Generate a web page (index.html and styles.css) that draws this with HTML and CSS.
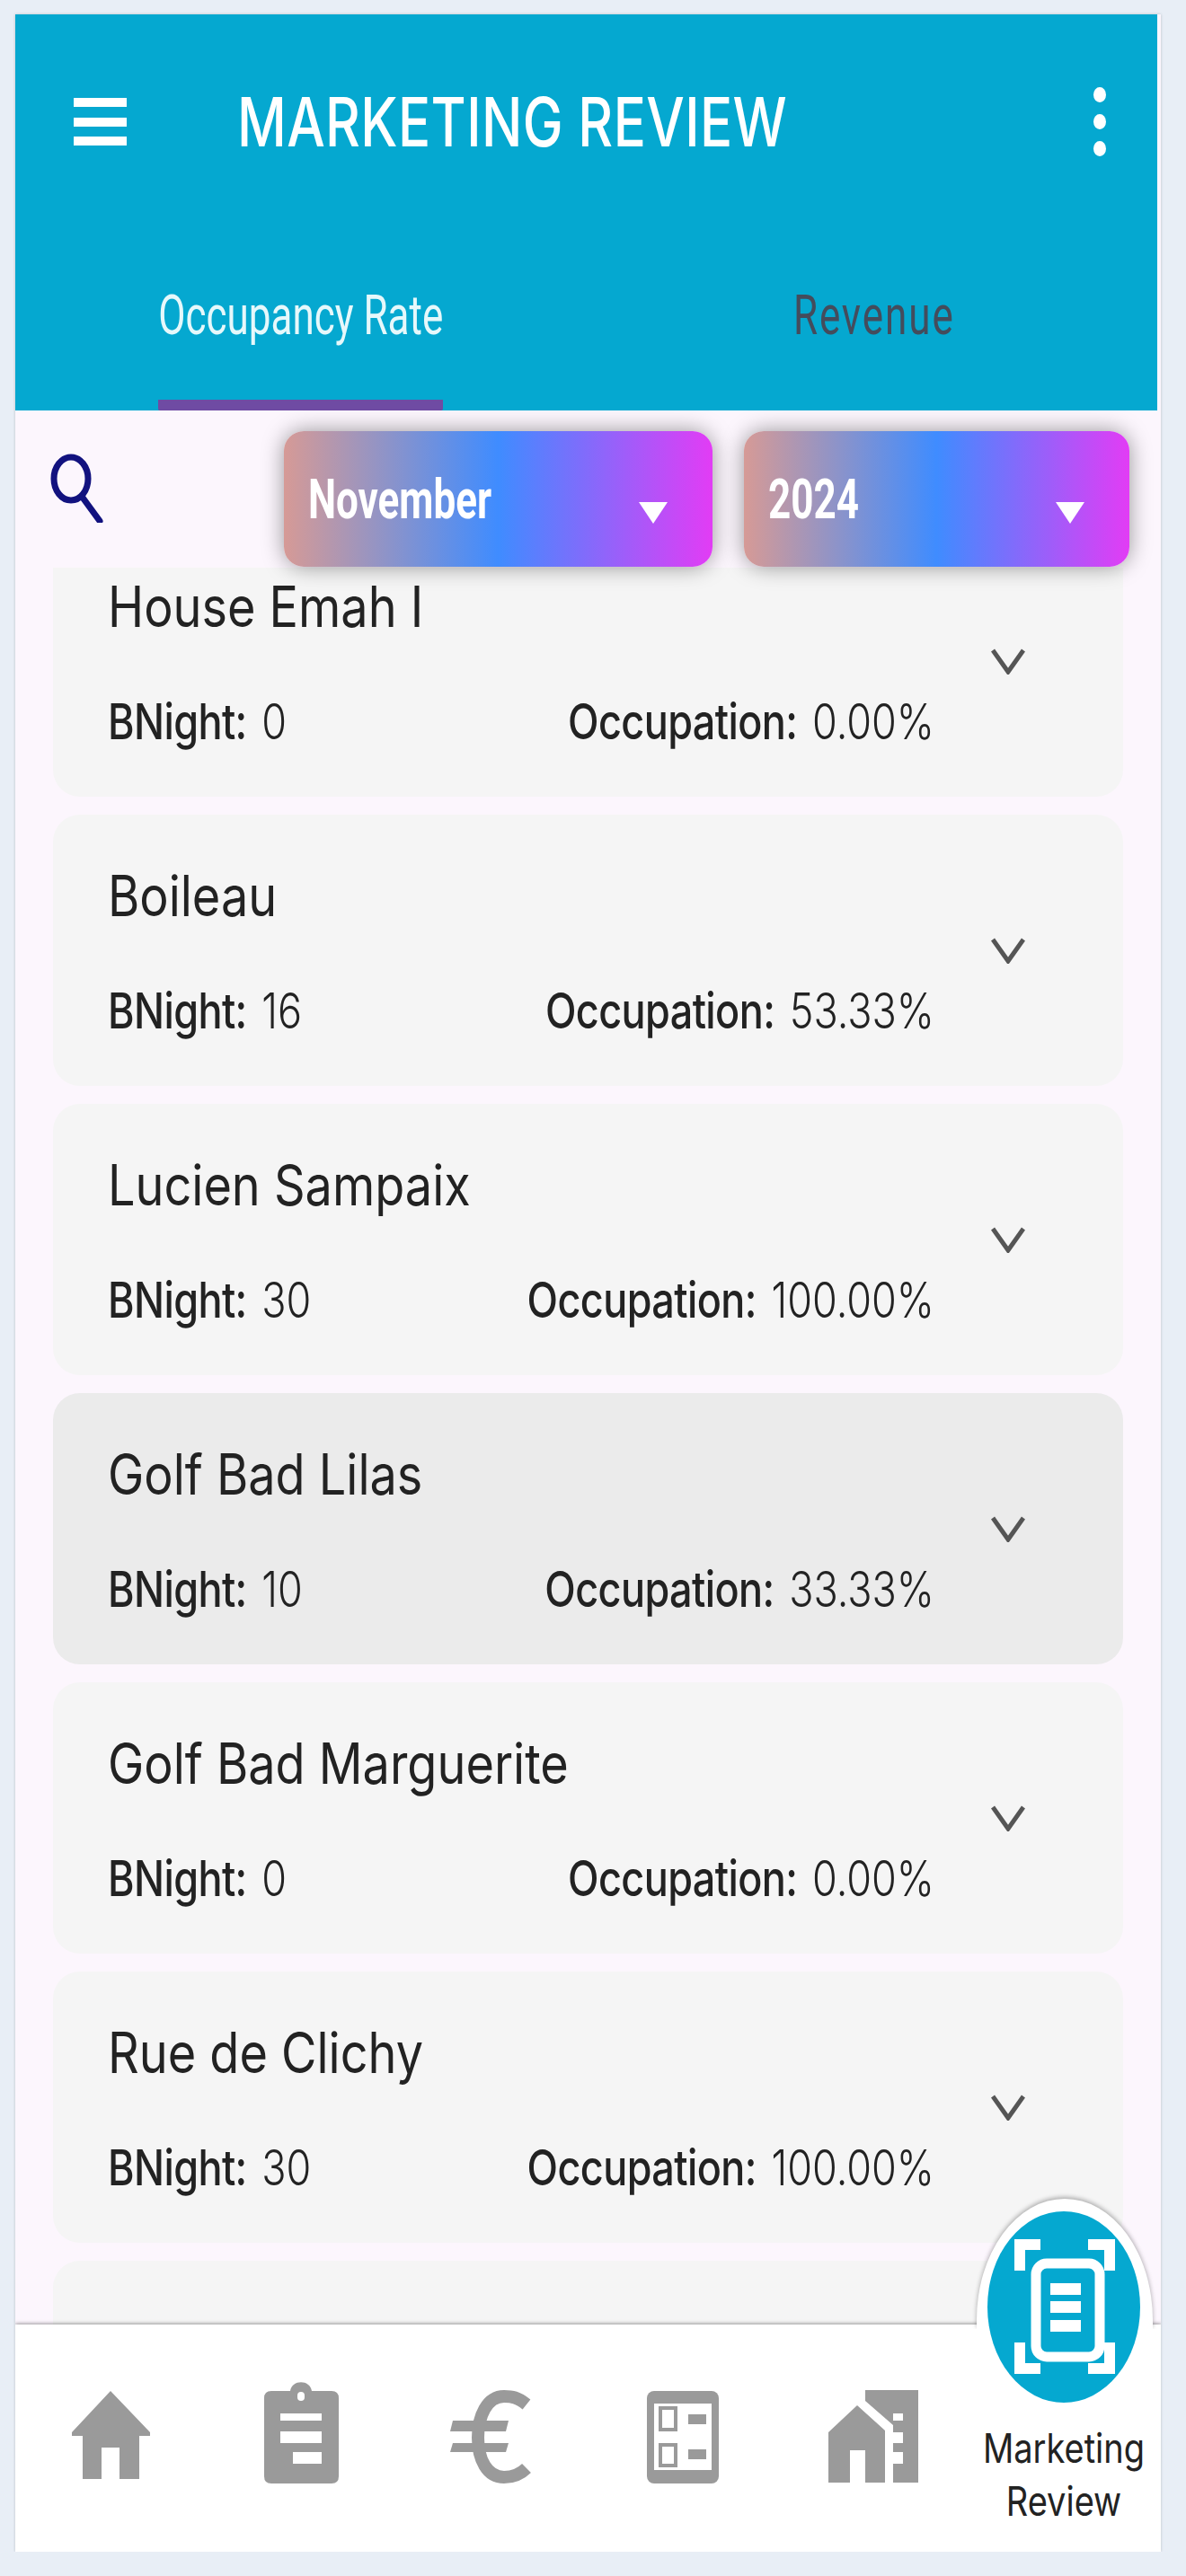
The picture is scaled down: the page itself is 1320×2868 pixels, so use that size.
FILE: index.html
```html
<!DOCTYPE html>
<html>

<head>
    <meta charset="utf-8">
    <meta name="viewport" content="width=device-width, initial-scale=1.0">
    <title>Marketing Review</title>
    <link rel="stylesheet" href="styles.css">
</head>

<body>
    <div class="phone">
        <header class="app-bar">
            <div class="top-row">
                <svg class="menu-icon" viewBox="0 0 59 53">
                    <rect x="0" y="0" width="59" height="10" fill="#fff" />
                    <rect x="0" y="22" width="59" height="10" fill="#fff" />
                    <rect x="0" y="43" width="59" height="10" fill="#fff" />
                </svg>
                <h1 class="page-title">MARKETING REVIEW</h1>
                <div class="more-dots"><i></i><i></i><i></i></div>
            </div>
            <div class="tabs">
                <div class="tab"><div class="tab-label active"><span>Occupancy Rate</span></div></div>
                <div class="tab"><div class="tab-label"><span>Revenue</span></div></div>
            </div>
        </header>

        <div class="filters">
            <svg class="search-icon" viewBox="0 0 60 78">
                <ellipse cx="24" cy="29" rx="19" ry="24" fill="none" stroke="#12127f" stroke-width="7" />
                <path d="M37 50 L56 76" fill="none" stroke="#12127f" stroke-width="7" stroke-linecap="round" />
            </svg>
            <div class="dropdown month"><span class="dropdown-text">November</span><i class="caret"></i></div>
            <div class="dropdown year"><span class="dropdown-text">2024</span><i class="caret"></i></div>
        </div>

        <div class="list">
            <div class="card first">
                <div class="card-body">
                    <div class="card-title"><span>House Emah I</span></div>
                    <div class="stats"><span><b>BNight:</b> 0</span><span><b>Occupation:</b> 0.00%</span></div>
                </div>
                <svg class="chevron" viewBox="0 0 38 30"><path d="M2 3 L19 27 L36 3" /></svg>
            </div>
            <div class="card">
                <div class="card-body">
                    <div class="card-title"><span>Boileau</span></div>
                    <div class="stats"><span><b>BNight:</b> 16</span><span><b>Occupation:</b> 53.33%</span></div>
                </div>
                <svg class="chevron" viewBox="0 0 38 30"><path d="M2 3 L19 27 L36 3" /></svg>
            </div>
            <div class="card">
                <div class="card-body">
                    <div class="card-title"><span>Lucien Sampaix</span></div>
                    <div class="stats"><span><b>BNight:</b> 30</span><span><b>Occupation:</b> 100.00%</span></div>
                </div>
                <svg class="chevron" viewBox="0 0 38 30"><path d="M2 3 L19 27 L36 3" /></svg>
            </div>
            <div class="card selected">
                <div class="card-body">
                    <div class="card-title"><span>Golf Bad Lilas</span></div>
                    <div class="stats"><span><b>BNight:</b> 10</span><span><b>Occupation:</b> 33.33%</span></div>
                </div>
                <svg class="chevron" viewBox="0 0 38 30"><path d="M2 3 L19 27 L36 3" /></svg>
            </div>
            <div class="card">
                <div class="card-body">
                    <div class="card-title"><span>Golf Bad Marguerite</span></div>
                    <div class="stats"><span><b>BNight:</b> 0</span><span><b>Occupation:</b> 0.00%</span></div>
                </div>
                <svg class="chevron" viewBox="0 0 38 30"><path d="M2 3 L19 27 L36 3" /></svg>
            </div>
            <div class="card">
                <div class="card-body">
                    <div class="card-title"><span>Rue de Clichy</span></div>
                    <div class="stats"><span><b>BNight:</b> 30</span><span><b>Occupation:</b> 100.00%</span></div>
                </div>
                <svg class="chevron" viewBox="0 0 38 30"><path d="M2 3 L19 27 L36 3" /></svg>
            </div>
            <div class="card">
                <div class="card-body">
                    <div class="card-title"><span>Favelle</span></div>
                </div>
            </div>
        </div>

        <nav class="bottom-nav">
            <svg class="nav-icon" viewBox="0 0 205 120">
                <path d="M103 12 L147 58 V62 H135 V110 H113 V75 H93 V110 H72 V62 H60 V58 Z" />
            </svg>
            <svg class="nav-icon" viewBox="0 0 205 120">
                <path d="M77 12 H98 C100 -1 120 -1 122 12 H144 Q152 12 152 20 V107 Q152 115 144 115 H77 Q69 115 69 107 V20 Q69 12 77 12 Z" />
                <rect class="cut" x="106" y="13" width="8" height="10" rx="4" />
                <rect class="cut" x="87" y="37" width="46" height="8" />
                <rect class="cut" x="87" y="57" width="46" height="13" />
                <rect class="cut" x="101" y="80" width="32" height="13" />
            </svg>
            <svg class="nav-icon" viewBox="0 0 205 120">
                <path class="euro" d="M156 27 C146 19 140 18 131 18 C112 18 102 40 102 64 C102 88 112 108 131 108 C140 108 148 106 156 98" />
                <path d="M74 45 H136 L133 57 H71 Z" />
                <path d="M74 70 H136 L133 80 H71 Z" />
            </svg>
            <svg class="nav-icon" viewBox="0 0 205 120">
                <rect x="85" y="12" width="80" height="103" rx="8" />
                <rect class="cut" x="93" y="26" width="64" height="74" />
                <rect x="98" y="29" width="21" height="28" />
                <rect class="cut" x="102" y="33" width="13" height="20" />
                <rect x="98" y="70" width="21" height="27" />
                <rect class="cut" x="102" y="74" width="13" height="19" />
                <rect x="131" y="38" width="20" height="11" />
                <rect x="131" y="77" width="20" height="11" />
            </svg>
            <svg class="nav-icon" viewBox="0 0 205 120">
                <path d="M114 28 L145 56 V114 H123 V78 H106 V114 H82 V58 Z" />
                <path d="M123 11 H182 V114 H154 V50 L123 23 Z" />
                <rect class="cut" x="154" y="37" width="11" height="8" />
                <rect class="cut" x="154" y="58" width="11" height="12" />
                <rect class="cut" x="154" y="80" width="11" height="13" />
            </svg>
        </nav>

        <div class="fab-ring"></div>
        <div class="fab">
            <svg class="fab-circle" viewBox="0 0 170 213">
                <ellipse cx="85" cy="106.5" rx="85" ry="106.5" fill="#05a8d0" />
                <g fill="#fff">
                    <path d="M30 31 H59 V43 H42 V66 H30 Z" />
                    <path d="M112 31 H142 V66 H130 V43 H112 Z" />
                    <path d="M30 146 H42 V169 H59 V181 H30 Z" />
                    <path d="M130 146 H142 V181 H112 V169 H130 Z" />
                    <rect x="70" y="80" width="34" height="13" />
                    <rect x="70" y="100" width="34" height="13" />
                    <rect x="70" y="121" width="34" height="13" />
                </g>
                <rect x="54" y="58" width="71" height="104" rx="12" fill="none" stroke="#fff" stroke-width="11" />
            </svg>
            <div class="fab-label"><span>Marketing</span><span>Review</span></div>
        </div>
    </div>
</body>

</html>
```

FILE: styles.css
```css
* {
    padding: 0;
    margin: 0;
    box-sizing: border-box;
}

body {
    background: #e8eef6;
    font-family: "Inter", "Liberation Sans", sans-serif;
    color: #222;
}

.phone {
    position: relative;
    display: flex;
    flex-direction: column;
    width: 1275px;
    height: 2825px;
    margin: 16px 0 0 17px;
    background: #fcf6fd;
    overflow: hidden;
    box-shadow: 0 0 3px rgba(0, 0, 0, 0.2);
}

.app-bar {
    position: relative;
    z-index: 3;
    flex: 0 0 439px;
    width: 1271px;
    background: #05a8d0;
    display: flex;
    flex-direction: column;
}

.top-row {
    display: flex;
    align-items: center;
    height: 238px;
    padding: 0 57px 0 65px;
}

.menu-icon {
    width: 59px;
    height: 53px;
}

.page-title {
    flex: 1;
    margin-left: 123px;
    font-size: 60px;
    font-weight: 500;
    letter-spacing: 0.4px;
    white-space: nowrap;
    color: #fff;
    transform: scaleY(1.27);
    transform-origin: left center;
}

.more-dots {
    display: flex;
    flex-direction: column;
    gap: 13px;
}

.more-dots i {
    display: block;
    width: 14px;
    height: 17px;
    border-radius: 50%;
    background: #fff;
}

.tabs {
    flex: 1;
    display: grid;
    grid-template-columns: 1fr 1fr;
}

.tab {
    display: flex;
    justify-content: center;
}

.tab-label {
    height: 203px;
    padding: 67px 0 0 5px;
    font-family: "Roboto", "Liberation Sans", sans-serif;
    font-size: 44px;
    line-height: 60px;
    letter-spacing: 1.9px;
    color: #444c5c;
}

.tab-label span {
    display: inline-block;
    transform: scaleY(1.37);
}

.tab-label.active {
    padding-left: 0;
    letter-spacing: 0;
    color: #e6f8fb;
    border-bottom: 12px solid #6f4ba3;
    border-radius: 0 0 2px 2px;
}

.filters {
    position: relative;
    z-index: 2;
    flex: 0 0 175px;
    display: flex;
    align-items: flex-start;
    padding: 23px 35px 0 38px;
}

.search-icon {
    width: 60px;
    height: 78px;
    margin-top: 24px;
    margin-right: auto;
}

.dropdown {
    display: flex;
    align-items: center;
    justify-content: space-between;
    height: 151px;
    padding: 0 50px 0 27px;
    border-radius: 22px;
    background: linear-gradient(90deg, #d69a96 0%, #3f8cff 50%, #e23cf5 100%);
    box-shadow: 0 0 24px rgba(0, 0, 0, 0.4);
}

.dropdown.month {
    width: 477px;
    margin-right: 35px;
}

.dropdown.year {
    width: 429px;
}

.dropdown-text {
    font-family: "Roboto", "Liberation Sans", sans-serif;
    font-size: 44px;
    font-weight: 700;
    color: #fff;
    transform: scaleY(1.4);
    transform-origin: left center;
}

.caret {
    display: block;
    margin-top: 30px;
    border-left: 16px solid transparent;
    border-right: 16px solid transparent;
    border-top: 24px solid #fff;
}

.list {
    flex: 1;
    display: flex;
    flex-direction: column;
    gap: 20px;
    padding: 0 42px;
    overflow: hidden;
}

.card {
    flex: 0 0 302px;
    display: flex;
    align-items: center;
    padding: 0 109px 0 61px;
    border-radius: 30px;
    background: #f5f5f5;
}

.card.first {
    margin-top: -47px;
}

.card.selected {
    background: #ebebeb;
}

.card-body {
    flex: 1;
    margin-right: 63px;
    padding-top: 6px;
}

.card-title {
    font-size: 54px;
    line-height: 56px;
    margin-bottom: 71px;
}

.card-title span {
    display: inline-block;
    transform: scaleY(1.16);
    transform-origin: left center;
}

.stats {
    display: flex;
    justify-content: space-between;
    font-size: 45px;
    line-height: 56px;
    font-weight: 300;
    word-spacing: 4px;
}

.stats span {
    display: inline-block;
    transform: scaleY(1.22);
    transform-origin: left center;
}

.stats b {
    font-weight: 500;
    letter-spacing: -0.6px;
}

.chevron {
    width: 38px;
    height: 30px;
    flex: none;
}

.chevron path {
    fill: none;
    stroke: #555;
    stroke-width: 5;
}

.bottom-nav {
    position: relative;
    z-index: 2;
    flex: 0 0 253px;
    display: flex;
    align-items: flex-start;
    padding: 62px 0 0 3px;
    background: #fff;
    box-shadow: 0 -1px 4px rgba(0, 0, 0, 0.4);
}

.nav-icon {
    flex: none;
    width: 205px;
    height: 120px;
    fill: #9a9a9a;
}

.nav-icon .cut {
    fill: #fff;
}

.nav-icon .euro {
    fill: none;
    stroke: #9a9a9a;
    stroke-width: 14;
}

/* white bump of the raised item, only its top sticks out of the nav */
.fab-ring {
    position: absolute;
    z-index: 3;
    left: 1070px;
    top: 2432px;
    width: 196px;
    height: 145px;
    border-radius: 98px 98px 0 0 / 135px 135px 0 0;
    background: #fff;
    box-shadow: 0 -2px 5px rgba(0, 0, 0, 0.3);
    clip-path: inset(-8px -8px 0 -8px);
}

.fab {
    position: absolute;
    z-index: 4;
    left: 1072px;
    top: 2446px;
    width: 190px;
    display: flex;
    flex-direction: column;
    align-items: center;
}

.fab-circle {
    width: 170px;
    height: 213px;
    flex: none;
}

.fab-label {
    display: flex;
    flex-direction: column;
    align-items: center;
    margin-top: 22px;
    font-size: 38px;
    line-height: 59px;
    white-space: nowrap;
    color: #222;
}

.fab-label span {
    transform: scaleY(1.18);
}
```
